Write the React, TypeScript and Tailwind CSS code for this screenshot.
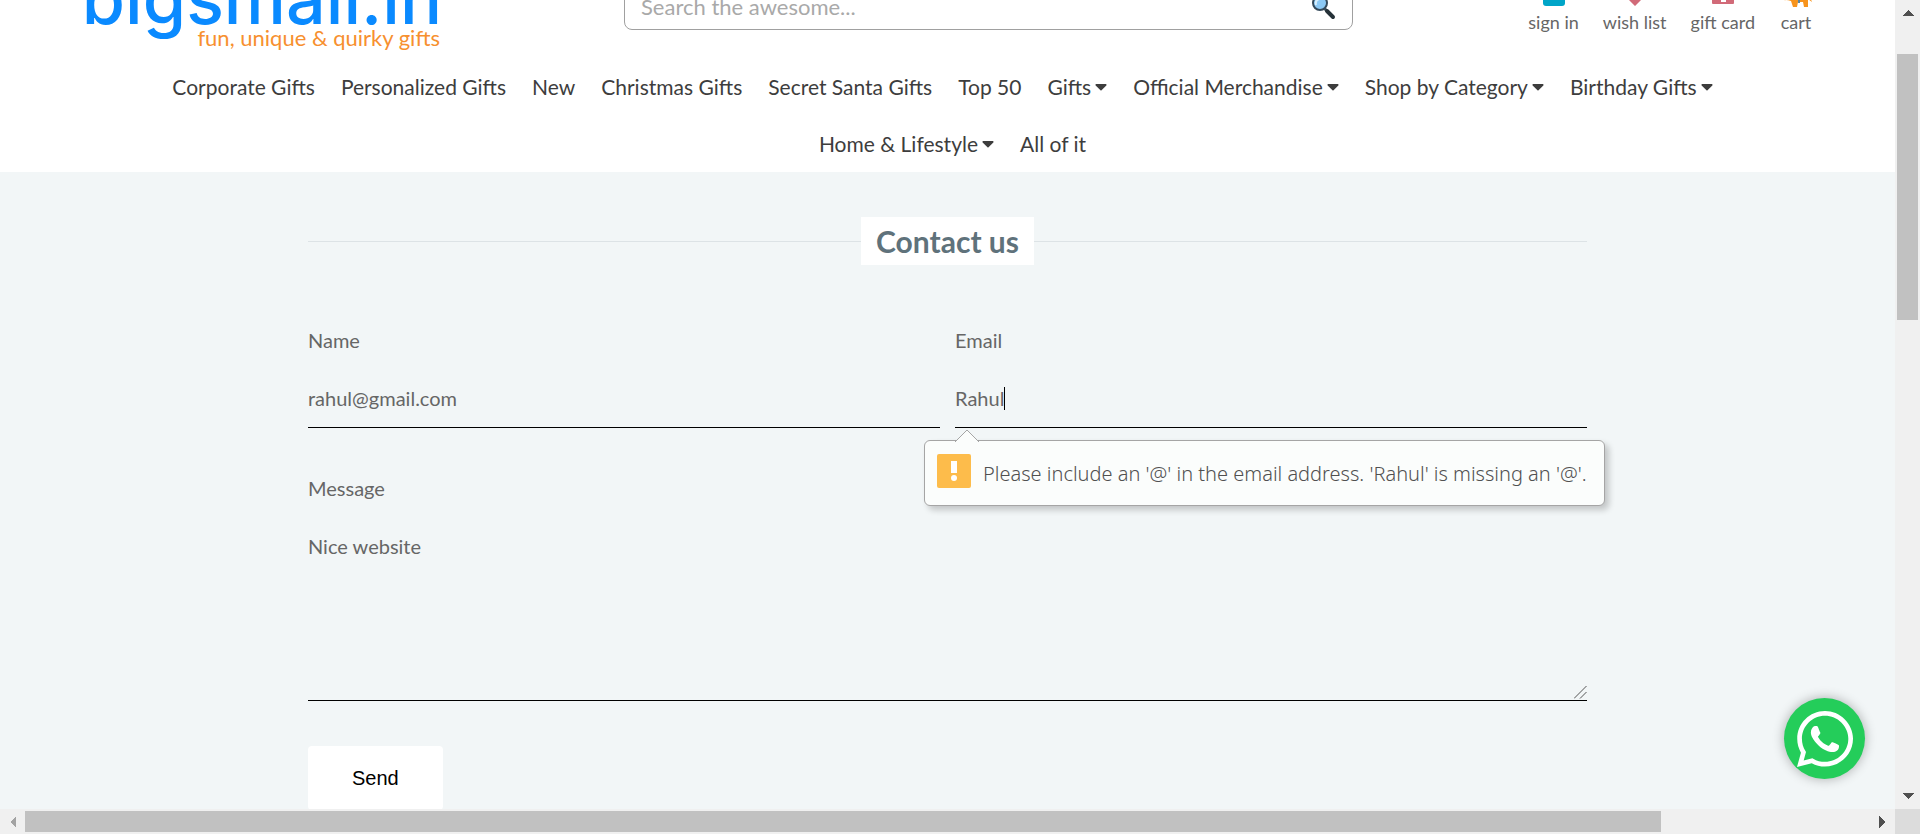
import { useId } from "react";
import { FaCaretDown, FaWhatsapp } from "react-icons/fa";

type NavLink = { label: string; menu?: boolean };

const primaryLinks: NavLink[] = [
  { label: "Corporate Gifts" },
  { label: "Personalized Gifts" },
  { label: "New" },
  { label: "Christmas Gifts" },
  { label: "Secret Santa Gifts" },
  { label: "Top 50" },
  { label: "Gifts", menu: true },
  { label: "Official Merchandise", menu: true },
  { label: "Shop by Category", menu: true },
  { label: "Birthday Gifts", menu: true },
];

const secondaryLinks: NavLink[] = [
  { label: "Home & Lifestyle", menu: true },
  { label: "All of it" },
];

function Magnifier() {
  return (
    <svg viewBox="0 0 24 30" className="h-[30px] w-6" aria-hidden="true">
      <path d="M12 17 L16 21" stroke="#4a5a63" strokeWidth="3" />
      <path d="M15 20 L21 26" stroke="#263238" strokeWidth="4" strokeLinecap="round" />
      <circle cx="8" cy="12" r="7" fill="#8cc9f5" stroke="#34495a" strokeWidth="2" />
      <path d="M4 14 Q3 9 7 8" stroke="#d8effd" strokeWidth="2" fill="none" />
    </svg>
  );
}

function SignInIcon() {
  return (
    <svg viewBox="0 0 24 24" className="size-6" aria-hidden="true">
      <rect x="1" y="1" width="22" height="22" rx="3" fill="#00a5c8" />
    </svg>
  );
}

function HeartIcon() {
  return (
    <svg viewBox="0 0 24 24" className="size-6" aria-hidden="true">
      <path d="M12 23 L2 13 Q-1 4 6 3 Q10 3 12 7 Q14 3 18 3 Q25 4 22 13 Z" fill="#d16a78" />
    </svg>
  );
}

function GiftCardIcon() {
  return (
    <svg viewBox="0 0 24 24" className="size-6" aria-hidden="true">
      <rect x="1" y="3" width="22" height="18" rx="1" fill="#d16a78" />
      <rect x="10" y="14" width="5" height="5" fill="#fff" />
    </svg>
  );
}

function ElephantIcon() {
  return (
    <svg viewBox="0 0 34 30" className="h-[30px] w-[34px]" aria-hidden="true">
      <path
        d="M5 12 Q5 5 13 5 L24 5 Q29 6 30 13 L31 20 L33 25 L29 22 L29 30 L25 30 L24 25 L19 25 L18 30 L14 30 L12 24 Q9 23 7 23 Q4 24 2 19 L6 20 Z"
        fill="#f7941d"
      />
      <path d="M14 5 V21 H26 V5 M20 5 V26" stroke="#5d87a1" strokeWidth="2" fill="none" />
    </svg>
  );
}

const shortcuts = [
  { label: "sign in", Icon: SignInIcon },
  { label: "wish list", Icon: HeartIcon },
  { label: "gift card", Icon: GiftCardIcon },
  { label: "cart", Icon: ElephantIcon },
];

function Arrow({ points, color }: { points: string; color: string }) {
  return (
    <svg viewBox="0 0 12 12" className="size-3" shapeRendering="crispEdges" aria-hidden="true">
      <polygon points={points} fill={color} />
    </svg>
  );
}

function NavItem({ label, menu }: NavLink) {
  return (
    <a href="#shop" className="flex items-center gap-1">
      {label}
      {menu && <FaCaretDown className="w-3" />}
    </a>
  );
}

function Header() {
  return (
    <header className="bg-white">
      <div className="flex h-[154px] items-end px-[82px]">
        <a href="#home" className="flex w-[360px] flex-col items-end pb-[6px] whitespace-nowrap">
          <span className="font-[Inter,sans-serif] text-[70px] leading-[50px] font-medium text-[#0a8aff]">
            bigsmall.in
          </span>
          <span className="pr-[2px] text-[22px] leading-7 text-[#f7902f]">fun, unique &amp; quirky gifts</span>
        </a>
        <form className="mb-[28px] ml-[182px] flex h-14 w-[729px] items-center rounded-lg border border-[#a0a0a0] px-4 pt-2">
          <input
            aria-label="Search"
            placeholder="Search the awesome..."
            className="min-w-0 flex-1 text-[22px] outline-none placeholder:text-[#a9a9a9]"
          />
          <button aria-label="Submit search">
            <Magnifier />
          </button>
        </form>
        <div className="mb-[25px] ml-auto flex items-end gap-6 text-[18px] leading-[22px] text-[#666]">
          {shortcuts.map(({ label, Icon }) => (
            <a key={label} href="#account" className="flex flex-col items-center gap-1">
              <Icon />
              {label}
            </a>
          ))}
        </div>
      </div>
      <nav className="text-[21px] leading-[57px] text-[#3d3d3d]">
        <div className="flex justify-center gap-[26px] pr-[10px]">
          {primaryLinks.map((link) => (
            <NavItem key={link.label} {...link} />
          ))}
        </div>
        <div className="flex justify-center gap-[26px] pl-[10px]">
          {secondaryLinks.map((link) => (
            <NavItem key={link.label} {...link} />
          ))}
        </div>
      </nav>
    </header>
  );
}

function ValidationBubble() {
  return (
    <div
      role="alert"
      className="absolute top-full -left-[31px] mt-3 flex h-[66px] min-w-[681px] items-start gap-3 rounded-md border border-[#a5a5a5] bg-[#fbfdfc] px-3 pt-[13px] font-['Noto_Sans',sans-serif] text-[20px] leading-10 font-light whitespace-nowrap text-[#505050] shadow-[4px_4px_6px_rgba(0,0,0,0.2)]"
    >
      <svg viewBox="0 0 24 13" className="absolute bottom-full left-[30px] -mb-px h-[13px] w-6" aria-hidden="true">
        <path d="M0 13 L12 1 L24 13" fill="#fbfdfc" stroke="#a5a5a5" />
      </svg>
      <svg viewBox="0 0 34 34" className="size-[34px] shrink-0" aria-hidden="true">
        <rect width="34" height="34" rx="2" fill="#fdbc4b" />
        <rect x="14" y="7" width="6" height="12" fill="#fff" />
        <circle cx="17" cy="24" r="3" fill="#fff" />
      </svg>
      <span>Please include an '@' in the email address. 'Rahul' is missing an '@'.</span>
    </div>
  );
}

function ContactForm() {
  const id = useId();
  return (
    <main className="mx-auto w-[1279px] max-w-full pt-[45px] text-[20px] text-[#666]">
      <div className="flex items-center">
        <span className="h-px flex-1 bg-[#dde3e6]" />
        <h1 className="bg-white px-[15px] text-[30px] leading-[48px] font-bold text-[#5f727b]">Contact us</h1>
        <span className="h-px flex-1 bg-[#dde3e6]" />
      </div>
      <form noValidate>
        <div className="mt-16 grid grid-cols-2 gap-[15px]">
          <div className="flex flex-col">
            <label htmlFor={`${id}-name`} className="leading-[22px]">Name</label>
            <input
              id={`${id}-name`}
              defaultValue="rahul@gmail.com"
              className="mt-5 h-[57px] border-b border-black pb-[2px] outline-none"
            />
          </div>
          <div className="relative flex flex-col">
            <label htmlFor={`${id}-email`} className="leading-[22px]">Email</label>
            <input
              id={`${id}-email`}
              type="email"
              defaultValue="Rahul"
              className="mt-5 h-[57px] border-b border-black pb-[2px] outline-none"
            />
            <span className="absolute bottom-[18px] left-[49px] h-[23px] w-px bg-black" />
            <ValidationBubble />
          </div>
        </div>
        <div className="relative mt-[49px] flex flex-col">
          <label htmlFor={`${id}-message`} className="leading-[22px]">Message</label>
          <textarea
            id={`${id}-message`}
            defaultValue="Nice website"
            className="mt-5 h-[182px] resize-none border-b border-black py-4 leading-[22px] outline-none"
          />
          <svg viewBox="0 0 13 13" className="absolute right-0 bottom-[2px] size-[13px]" aria-hidden="true">
            <path d="M0 12.5 L12.5 0 M6 12.5 L12.5 6" stroke="#555" fill="none" />
          </svg>
        </div>
        <button className="mt-[45px] h-16 rounded bg-white px-11 font-['Liberation_Sans',sans-serif] text-[20px] text-black">
          Send
        </button>
      </form>
    </main>
  );
}

export default function App() {
  return (
    <div className="grid h-screen grid-cols-[1fr_25px] grid-rows-[1fr_25px] overflow-hidden bg-[#f2f6f7] font-[Lato,sans-serif]">
      <div className="relative min-h-0 min-w-0 overflow-hidden">
        <div className="-mt-24">
          <Header />
          <ContactForm />
        </div>
        <a
          href="#chat"
          aria-label="Chat on WhatsApp"
          className="absolute right-[30px] bottom-[30px] flex size-[81px] items-center justify-center rounded-full bg-[#24cd5a] text-white shadow-[0_0_12px_rgba(0,0,0,0.3)]"
        >
          <FaWhatsapp className="size-16" />
        </a>
      </div>
      <div className="flex flex-col items-center justify-between bg-[#f0f0f0] py-[7px]">
        <Arrow points="0,9 6,3 12,9" color="#505050" />
        <span className="mt-[35px] mb-auto h-[266px] w-[21px] bg-[#c1c1c1]" />
        <Arrow points="0,3 6,9 12,3" color="#505050" />
      </div>
      <div className="flex items-center bg-[#f0f0f0] px-[7px]">
        <Arrow points="9,0 3,6 9,12" color="#a3a3a3" />
        <span className="mr-auto ml-[6px] h-[21px] w-[87%] bg-[#c1c1c1]" />
        <Arrow points="3,0 9,6 3,12" color="#505050" />
      </div>
      <div className="bg-[#dcdcdc]" />
    </div>
  );
}
